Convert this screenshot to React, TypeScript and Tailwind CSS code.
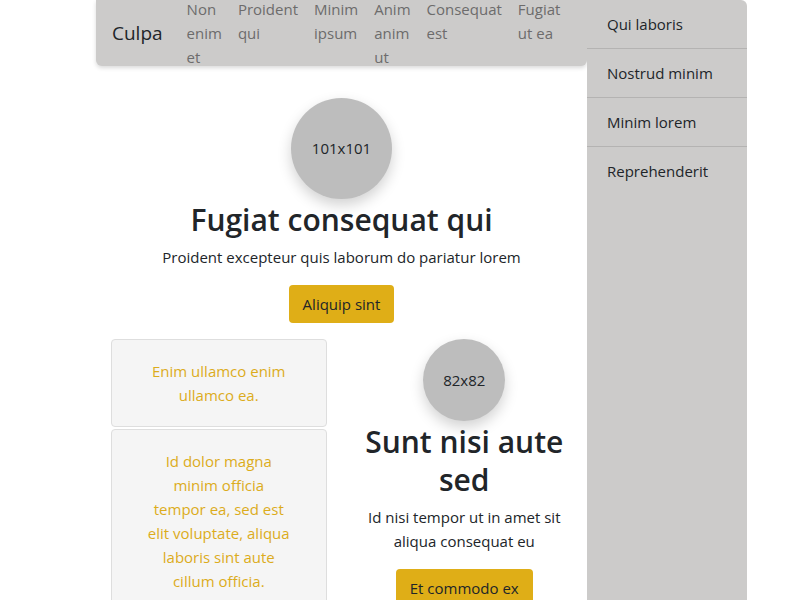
const links = ['Non enim et', 'Proident qui', 'Minim ipsum', 'Anim anim ut', 'Consequat est', 'Fugiat ut ea'];
const sideItems = ['Qui laboris', 'Nostrud minim', 'Minim lorem', 'Reprehenderit'];

function Avatar({ size, label }: { size: 'lg' | 'sm'; label: string }) {
  const dims = size === 'lg' ? 'w-[101px] h-[101px]' : 'w-[82px] h-[82px]';
  return (
    <div className={`${dims} mx-auto rounded-full bg-[#bdbdbd] flex items-center justify-center text-[15px] text-[#212529] shadow-[0_6px_14px_rgba(0,0,0,0.18)]`}>
      {label}
    </div>
  );
}

function Hero({ size, label, title, text, cta }: { size: 'lg' | 'sm'; label: string; title: string; text: string; cta: string }) {
  return (
    <div className="text-center">
      <Avatar size={size} label={label} />
      <h1 className="mt-[2px] mb-[6px] text-[30px] leading-[38px] font-semibold text-[#212529]">{title}</h1>
      <p className="mb-4 text-[15px] leading-6 text-[#212529]">{text}</p>
      <button className="px-[14px] py-[7px] rounded bg-[#dfae17] text-[15px] leading-6 text-[#212529]">{cta}</button>
    </div>
  );
}

export default function App() {
  return (
    <div className="min-h-[600px] bg-white font-['Segoe_UI','Open_Sans',sans-serif] flex pl-[96px]">
      <main className="w-[491px] shrink-0">
        <nav className="h-[66px] px-4 flex items-center bg-[#cccbca] rounded-b-md shadow-[0_2px_4px_rgba(0,0,0,0.15)]">
          <span className="mr-4 text-[19px] leading-[30px] text-[#212529]">Culpa</span>
          <ul className="flex">
            {links.map((l) => (
              <li key={l} className="w-min px-2 text-[15px] leading-6 text-[#6d6c6c]">{l}</li>
            ))}
          </ul>
        </nav>

        <section className="pt-8">
          <Hero size="lg" label="101x101" title="Fugiat consequat qui" text="Proident excepteur quis laborum do pariatur lorem" cta="Aliquip sint" />
        </section>

        <section className="mt-4 grid grid-cols-2">
          <div className="px-[15px] flex flex-col gap-[2px]">
            <div className="px-[34px] py-[19px] bg-[#f5f5f5] border border-[#dedede] rounded text-center text-[15px] leading-6 text-[#dcac1c]">
              Enim ullamco enim ullamco ea.
            </div>
            <div className="px-[34px] py-[19px] bg-[#f5f5f5] border border-[#dedede] rounded text-center text-[15px] leading-6 text-[#dcac1c]">
              Id dolor magna minim officia tempor ea, sed est elit voluptate, aliqua laboris sint aute cillum officia.
            </div>
          </div>
          <div className="px-[15px]">
            <Hero size="sm" label="82x82" title="Sunt nisi aute sed" text="Id nisi tempor ut in amet sit aliqua consequat eu" cta="Et commodo ex" />
          </div>
        </section>
      </main>

      <aside className="w-[160px] shrink-0 bg-[#cccbca] rounded-tr-md">
        {sideItems.map((s, i) => (
          <div key={s} className={`px-5 py-3 text-[15px] leading-6 text-[#212529] ${i < sideItems.length - 1 ? 'border-b border-[#b4b3b2]' : ''}`}>
            {s}
          </div>
        ))}
      </aside>
    </div>
  );
}
